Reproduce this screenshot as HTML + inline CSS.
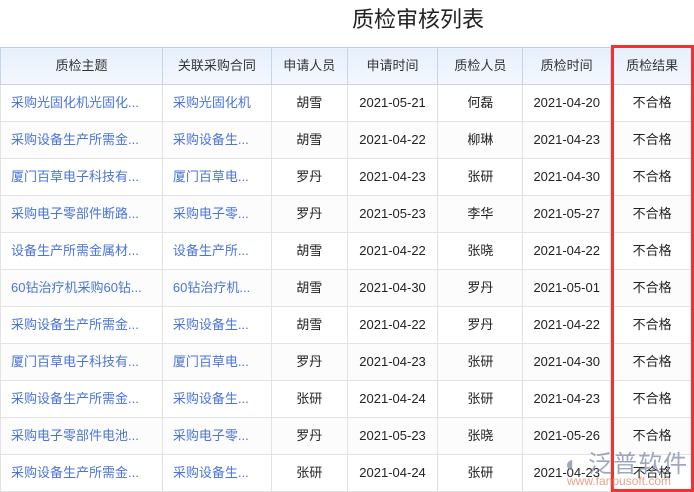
<!DOCTYPE html><html><head><meta charset="utf-8"><style>
body{margin:0;width:694px;height:492px;overflow:hidden;background:#fff;font-family:"Liberation Sans","Noto Sans CJK SC",sans-serif;position:relative}
h1{position:absolute;left:352px;top:4px;margin:0;font-weight:normal;font-size:22px;color:#222;line-height:32px}
table{position:absolute;left:0;top:47px;border-collapse:collapse;table-layout:fixed;font-size:13px}
th,td{padding:0;line-height:16px}
th{height:36px;background:linear-gradient(#e6effc,#f5f9fe);font-weight:normal;color:#333;border:1px solid #c3d6ea;border-top:1px solid #b9cfe6}
td{height:36px;border:1px solid #e3e3e3;text-align:center;color:#222;white-space:nowrap;overflow:hidden}
td.l{text-align:left;padding-left:10px;color:#4a74d8}
tr:nth-child(odd) td{background:#fcfcfc}
.red{position:absolute;left:611px;top:45px;width:77px;height:441px;border:3px solid #ee3333}
.wm{position:absolute;left:565px;top:444px;font-size:24px;color:#7e8aa8;opacity:.75;letter-spacing:1px}
.wm2{position:absolute;left:567px;top:474px;font-size:12px;color:#e08a70;opacity:.8}
</style></head><body>
<h1>质检审核列表</h1>
<table>
<colgroup><col style="width:162px"><col style="width:109px"><col style="width:76px"><col style="width:91px"><col style="width:85px"><col style="width:88px"><col style="width:83px"></colgroup>
<tr><th>质检主题</th><th>关联采购合同</th><th>申请人员</th><th>申请时间</th><th>质检人员</th><th>质检时间</th><th>质检结果</th></tr>
<tr><td class="l">采购光固化机光固化...</td><td class="l">采购光固化机</td><td>胡雪</td><td>2021-05-21</td><td>何磊</td><td>2021-04-20</td><td>不合格</td></tr>
<tr><td class="l">采购设备生产所需金...</td><td class="l">采购设备生...</td><td>胡雪</td><td>2021-04-22</td><td>柳琳</td><td>2021-04-23</td><td>不合格</td></tr>
<tr><td class="l">厦门百草电子科技有...</td><td class="l">厦门百草电...</td><td>罗丹</td><td>2021-04-23</td><td>张研</td><td>2021-04-30</td><td>不合格</td></tr>
<tr><td class="l">采购电子零部件断路...</td><td class="l">采购电子零...</td><td>罗丹</td><td>2021-05-23</td><td>李华</td><td>2021-05-27</td><td>不合格</td></tr>
<tr><td class="l">设备生产所需金属材...</td><td class="l">设备生产所...</td><td>胡雪</td><td>2021-04-22</td><td>张晓</td><td>2021-04-22</td><td>不合格</td></tr>
<tr><td class="l">60钻治疗机采购60钻...</td><td class="l">60钻治疗机...</td><td>胡雪</td><td>2021-04-30</td><td>罗丹</td><td>2021-05-01</td><td>不合格</td></tr>
<tr><td class="l">采购设备生产所需金...</td><td class="l">采购设备生...</td><td>胡雪</td><td>2021-04-22</td><td>罗丹</td><td>2021-04-22</td><td>不合格</td></tr>
<tr><td class="l">厦门百草电子科技有...</td><td class="l">厦门百草电...</td><td>罗丹</td><td>2021-04-23</td><td>张研</td><td>2021-04-30</td><td>不合格</td></tr>
<tr><td class="l">采购设备生产所需金...</td><td class="l">采购设备生...</td><td>张研</td><td>2021-04-24</td><td>张研</td><td>2021-04-23</td><td>不合格</td></tr>
<tr><td class="l">采购电子零部件电池...</td><td class="l">采购电子零...</td><td>罗丹</td><td>2021-05-23</td><td>张晓</td><td>2021-05-26</td><td>不合格</td></tr>
<tr><td class="l">采购设备生产所需金...</td><td class="l">采购设备生...</td><td>张研</td><td>2021-04-24</td><td>张研</td><td>2021-04-23</td><td>不合格</td></tr>
</table>
<div class="red"></div>
<div class="wm">◐ 泛普软件</div>
<div class="wm2">www.fanpusoft.com</div>
</body></html>
